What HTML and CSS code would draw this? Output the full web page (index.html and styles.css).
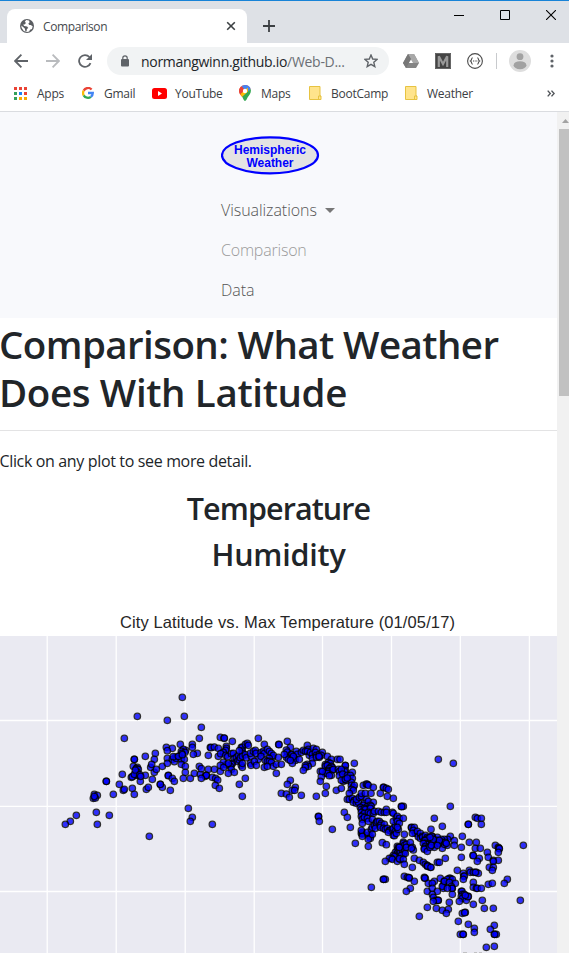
FILE: index.html
```html
<!DOCTYPE html>
<html lang="en">
<head>
<meta charset="utf-8">
<title>Comparison</title>
<link rel="stylesheet" href="styles.css">
</head>
<body>
<div class="window">
  <header class="tabstrip">
    <div class="tab">
      <svg class="globe" width="14" height="14" viewBox="0 0 14 14"><circle cx="7" cy="7" r="7" fill="#5a5d61"/><path d="M6.2 1.1 4.8 2.7 6 4.1 4.5 5.4 3.2 5.5 4.1 7.1 7.1 7.5 8.3 9.1 6.9 10.1 6.6 12.2 5.4 12.3 4.8 9.5 1.3 6.4 1.7 9.1 3.8 12 7 13 9.2 12.5 10 10.8 12 10 12.7 7.3 10.7 5.9 9.4 6.1 8.3 4.8 9.6 3.2 9 1.5Z" fill="#fff"/></svg>
      <span class="tab-title">Comparison</span>
      <svg class="tab-close" width="10" height="10" viewBox="0 0 10 10"><path d="M1.2 1.2l7.6 7.6M8.8 1.2L1.2 8.8" stroke="#3c4043" stroke-width="1.6"/></svg>
    </div>
    <svg class="new-tab" width="12" height="12" viewBox="0 0 12 12"><path d="M6 0v12M0 6h12" stroke="#3c4043" stroke-width="1.8"/></svg>
    <div class="controls">
      <svg width="10" height="10"><path d="M0 5.5h10" stroke="#000"/></svg>
      <svg width="10" height="10"><path d="M.5.5h9v9h-9z" fill="none" stroke="#000"/></svg>
      <svg width="10" height="10"><path d="M0 0l10 10M10 0L0 10" stroke="#000" stroke-width="1.1"/></svg>
    </div>
  </header>
  <div class="toolbar">
    <svg class="nav-icon" width="14" height="14" viewBox="0 0 14 14"><path d="M14 7H1.2M7.4.7 1.1 7l6.3 6.3" fill="none" stroke="#5f6368" stroke-width="1.8"/></svg>
    <svg class="nav-icon" width="14" height="14" viewBox="0 0 14 14"><path d="M0 7h12.8M6.6.7 12.9 7l-6.3 6.3" fill="none" stroke="#b9bbbe" stroke-width="1.8"/></svg>
    <svg class="nav-icon" width="14" height="14" viewBox="0 0 14 14"><path d="M12.5 9.1A5.9 5.9 0 1 1 11.4 3" fill="none" stroke="#5f6368" stroke-width="1.8"/><path d="M14 0v6H8Z" fill="#5f6368"/></svg>
    <div class="omnibox">
      <svg width="8" height="12" viewBox="0 0 8 12"><path d="M1.8 5V3a2.2 2.2 0 0 1 4.4 0v2" fill="none" stroke="#5f6368" stroke-width="1.2"/><rect y="4" width="8" height="7.4" rx="1" fill="#5f6368"/></svg>
      <span class="url">normangwinn.github.io<i>/Web-D...</i></span>
      <svg class="star" width="14" height="14" viewBox="0 0 14 14"><path d="M7 1l1.7 4 4.3.4-3.2 2.9 1 4.3L7 10.3l-3.8 2.3 1-4.3L1 5.4 5.3 5Z" fill="none" stroke="#5f6368" stroke-width="1.4"/></svg>
    </div>
    <svg class="ext-drive" width="16" height="14" viewBox="0 0 16 14"><path d="M5 0h6l5 9-3 5H3L0 9Z" fill="#858585"/><path d="M5 0h6l5 9h-6Z" fill="#a8a8a8"/><path d="M5 0 0 9l3 5 5-9Z" fill="#777"/><path d="M8 5.5 5.9 9h4.2Z" fill="#fff"/></svg>
    <svg class="ext-m" width="16" height="16" viewBox="0 0 16 16"><rect width="16" height="16" fill="#444"/><path d="M.5 15.5V.5h15v15Z" fill="none" stroke="#666"/><path d="M3.8 14V3.2L8 11l4.2-7.8V14" fill="none" stroke="#999" stroke-width="2.2"/></svg>
    <svg class="ext-b" width="16" height="16" viewBox="0 0 16 16"><circle cx="8" cy="8" r="7.4" fill="#fff" stroke="#4b4b4b" stroke-width="1.1"/><path d="M5.7 4.8c-1.5 0-.7 2.5-2.2 3.2 1.5.7.7 3.2 2.2 3.2M10.3 4.8c1.5 0 .7 2.5 2.2 3.2-1.5.7-.7 3.2-2.2 3.2M6 8h1M7.7 8h1M9.3 8h1" fill="none" stroke="#4b4b4b" stroke-width="1.1"/></svg>
    <span class="divider"></span>
    <svg class="avatar" width="22" height="22" viewBox="0 0 22 22"><circle cx="11" cy="11" r="11" fill="#dedede"/><circle cx="11" cy="6.7" r="3.4" fill="#a2a2a2"/><ellipse cx="11" cy="15.2" rx="6.4" ry="4" fill="#a2a2a2"/></svg>
    <svg class="dots" width="4" height="14" viewBox="0 0 4 14"><g fill="#5f6368"><circle cx="2" cy="2" r="1.6"/><circle cx="2" cy="7" r="1.6"/><circle cx="2" cy="12" r="1.6"/></g></svg>
  </div>
  <nav class="bookmarks">
    <span class="bm apps"><svg width="13" height="13" viewBox="0 0 13 13"><path d="M0 0h3v3H0zM5 0h3v3H5zM10 0h3v3h-3zM10 5h3v3h-3z" fill="#ea4335"/><path d="M0 5h3v3H0zM0 10h3v3H0z" fill="#34a05a"/><path d="M5 5h3v3H5z" fill="#1a82f7"/><path d="M5 10h3v3H5zM10 10h3v3h-3z" fill="#f9ab00"/></svg>Apps</span>
    <span class="bm gmail"><svg width="12" height="12" viewBox="0 0 12 12"><g fill="none" stroke-width="2.3"><path d="M9.6 2.5A4.9 4.9 0 0 0 1.7 3.6" stroke="#ea4335"/><path d="M1.7 3.6a4.9 4.9 0 0 0 0 4.8" stroke="#fbbc05"/><path d="M1.7 8.4a4.9 4.9 0 0 0 7.2 1.4" stroke="#34a853"/><path d="M8.9 9.8A4.8 4.8 0 0 0 10.8 6H6" stroke="#4285f4"/></g></svg>Gmail</span>
    <span class="bm youtube"><svg width="15" height="11" viewBox="0 0 15 11"><rect width="15" height="11" rx="2.5" fill="#f00"/><path d="M6 3v5l4-2.5Z" fill="#fff"/></svg>YouTube</span>
    <span class="bm maps"><svg width="12" height="16" viewBox="0 0 12 16"><path d="M6 0a6 6 0 0 1 5.6 4L3.2 12C1.9 10 0 9 0 6a6 6 0 0 1 6-6Z" fill="#ea4335"/><path d="M6 0a6 6 0 0 1 5.6 4L8 8 2.5 1Z" fill="#4285f4"/><path d="M.2 4.3 2 1.5 6 5 1.4 9.3C.4 8 0 6.4.2 4.3Z" fill="#ea4335"/><path d="M1.2 9.2 8.8 2.6 9 8 3.4 12Z" fill="#fbbc05"/><path d="M11.7 4c1 4-1.8 6-3 8.3C7.8 14 7.2 16 6 16s-1.8-2.5-2.8-4.2Z" fill="#34a853"/><circle cx="6" cy="6" r="2.2" fill="#fff"/></svg>Maps</span>
    <span class="bm boot"><svg width="13" height="14" viewBox="0 0 13 14"><path d="M.5.5h10.5v9.5h1v3.5H.5Z" fill="#ffe48c" stroke="#e7c341"/><path d="M9.5 13.5V10H12" fill="none" stroke="#e7c341"/></svg>BootCamp</span>
    <span class="bm weather"><svg width="13" height="14" viewBox="0 0 13 14"><path d="M.5.5h10.5v9.5h1v3.5H.5Z" fill="#ffe48c" stroke="#e7c341"/><path d="M9.5 13.5V10H12" fill="none" stroke="#e7c341"/></svg>Weather</span>
    <svg class="more" width="8" height="7" viewBox="0 0 8 7"><path d="M.7.6 3.3 3.5.7 6.4M4.5.6l2.6 2.9-2.6 2.9" fill="none" stroke="#505459" stroke-width="1.4"/></svg>
  </nav>
  <div class="viewport">
    <main class="page">
      <nav class="sitenav">
        <svg class="brand" width="99" height="39" viewBox="0 0 99 39"><ellipse cx="49" cy="19.3" rx="48" ry="18" fill="#e3e3e3" stroke="#00f" stroke-width="2.2"/><text x="49" y="18" textLength="72">Hemispheric</text><text x="49" y="31" textLength="47">Weather</text></svg>
        <a class="link">Visualizations<span class="caret"></span></a>
        <a class="link active">Comparison</a>
        <a class="link">Data</a>
      </nav>
      <h1><span class="l1">Comparison: What Weather</span><br><span class="l2">Does With Latitude</span></h1>
      <hr>
      <p>Click on any plot to see more detail.</p>
      <h2>Temperature</h2>
      <h2 class="humidity">Humidity</h2>
      <div class="plot-title">City Latitude vs. Max Temperature (01/05/17)</div>
      <svg class="plot" width="557" height="317" viewBox="0 636 557 317">
        <rect y="636" width="557" height="317" fill="#eaeaf2"/>
        <path d="M47.2 636v317M116.2 636v317M185.2 636v317M254.2 636v317M322.5 636v317M391.5 636v317M460.3 636v317M529.4 636v317M0 720.5h557M0 806.4h557M0 891.5h557" stroke="#fff" stroke-width="1.3"/>
        <path d="M463 952.7h4M474 952.7h3M479 952.7h3" stroke="#aaa" stroke-width=".8"/>
        <g id="points"></g>
      </svg>
    </main>
    <aside class="scrollbar"><span class="up"></span><span class="thumb"></span></aside>
  </div>
</div>
<script src="plot.js"></script>
</body>
</html>
```
FILE: plot.js
```js
// City markers, stored per tile in thirds of a pixel from the tile origin.
const tiles = [
  [50, 680, "262,109 352,121 223,175 349,202 367,205 352,212 316,220 286,229 313,238 253,238 253,238 250,259 302,262 305,253 337,259 352,235 352,250 217,283 169,304 169,304 208,313 220,331 223,328 247,325 253,343 190,343 133,343 142,346 130,355 136,354 133,349 139,397 178,406 79,406 61,424 46,433 142,433 298,469 286,286 271,304 307,298 313,277 319,268 289,328 295,322 331,313 337,322 355,286 355,287 361,331 367,295 373,304 262,262 259,266 265,268 256,286 265,286 244,292 247,290 262,277 253,283 269,284 272,289 256,270"],
  [155, 680, "82,52 88,109 139,142 133,175 76,193 112,193 112,202 92,211 85,208 79,214 90,217 80,220 73,229 61,232 52,238 58,245 64,235 55,230 79,238 88,238 79,253 91,259 70,229 82,224 91,277 85,295 106,295 127,220 115,223 118,280 136,283 133,259 139,266 151,289 160,268 154,286 154,286 139,295 178,268 172,292 182,295 188,300 181,316 193,325 196,274 160,226 166,202 168,203 178,201 190,205 196,172 207,175 208,174 232,184 214,199 214,205 212,211 205,217 190,229 197,221 212,226 218,230 229,221 235,220 238,236 244,233 250,226 247,244 253,240 256,233 232,250 230,253 226,259 214,254 205,247 196,256 206,262 220,250 229,268 220,280 238,277 259,202 262,202 271,193 277,190 280,196 262,213 263,220 262,229 253,212 271,224 274,233 289,229 286,220 295,214 301,211 310,175 303,220 310,238 259,256 262,262 262,250 286,250 288,256 298,244 304,256 271,295 253,313 262,349 16,313 100,385 112,412 106,424 172,433"],
  [260, 720, "13,73 56,73 57,74 82,64 91,82 79,90 82,96 94,103 96,104 109,94 112,103 103,115 97,115 106,121 79,112 85,118 73,103 100,109 118,118 97,130 91,121 124,97 130,91 142,76 145,88 136,94 142,94 148,106 151,97 157,103 160,85 169,88 157,115 157,130 142,133 145,139 136,136 136,142 130,151 166,97 169,106 169,112 178,103 187,97 184,106 178,112 177,109 202,109 214,118 232,118 205,127 211,130 196,134 196,139 202,136 214,139 217,142 208,145 205,151 205,155 217,150 220,148 196,160 202,160 214,166 208,167 181,154 184,170 181,184 187,154 235,148 238,155 238,167 199,199 196,220 229,211 169,229 124,226 106,202 97,211 104,211 91,181 82,193 64,220 79,222 88,232 49,160 175,289 176,290 178,304 217,328 3,98 10,94 13,100 3,109 22,88 28,94 34,100 37,112 40,106 28,115 16,121 22,124 28,124 34,127 13,142 22,139 40,139 49,133 64,133 55,112"],
  [340, 750, "43,40 16,46 16,47 16,61 14,65 37,67 4,58 8,72 22,76 31,76 37,85 10,94 19,91 4,91 16,88 34,97 4,115 34,106 40,112 43,106 34,118 40,121 28,130 22,148 28,148 37,145 43,151 40,157 49,160 55,157 49,148 58,142 64,139 64,130 76,130 79,148 93,130 70,106 79,102 82,103 85,106 100,112 121,130 130,112 131,112 139,115 145,118 142,139 160,145 73,160 85,154 100,157 70,166 82,169 91,166 94,169 61,172 64,178 73,175 78,180 76,178 91,175 64,187 67,196 73,190 85,187 91,190 100,190 103,184 115,184 124,187 133,187 139,178 139,187 157,187 160,190 184,169 190,169 185,170 64,199 67,208 73,202 82,205 67,220 85,214 97,208 13,187 22,202 31,232 46,280 85,289 64,250 67,247 67,252 64,241 67,259 85,256 91,259 91,265 85,268 82,247 94,238 97,232 97,253 103,226 109,217 109,220 112,214 118,214 106,235 124,220 121,226 121,232 133,223 130,235 136,238 142,235 148,241 151,241 145,247 157,238 160,235 166,244 160,256 163,257 169,250 166,226 160,214 169,205 172,199 178,205 172,214 190,205 178,220 175,238 172,232 193,253 214,232 215,233 223,232 220,241 226,250 217,250 232,244 235,260 241,250 241,265 247,259 248,262 256,256 262,262 253,271 262,271 265,265 265,283 256,271 127,278 139,284 0,28 22,84"],
  [340, 840, "190,6 190,10 193,16 199,13 211,8 172,19 175,22 172,30 166,37 172,40 178,31 181,37 187,31 193,35 190,43 184,46 196,40 178,22 199,22 217,22 220,30 214,25 160,46 163,50 154,55 148,55 136,64 157,58 172,64 181,58 178,56 190,58 193,73 217,82 223,55 238,61 250,67 256,73 262,76 262,79 271,82 263,78 256,10 262,13 250,10 256,19 265,22 253,25 253,28 262,34 130,118 136,118 131,118 94,142 193,109 202,112 208,114 207,113 223,124 211,145 199,154 238,229 253,112 256,115 254,114 265,130 262,154 262,202"],
  [430, 750, "25,28 70,40 61,169 13,205 37,229 3,238 136,202 142,205 154,205 154,223 115,223 115,223 97,259 61,259 73,272 73,286 118,277 139,277 94,292 136,295 151,295 196,286 205,292 207,295 208,296 205,307 172,307 175,322 280,286 129,316 130,317 148,325 94,322 46,325 190,331 205,331 37,295 52,286 53,268 43,268 34,268 37,277 43,283 46,277 22,262 19,271 16,280 19,277 25,280 28,271 7,259 5,259 4,271 7,280 13,292 0,292 10,268 4,286 0,262 22,286 49,280"],
  [430, 845, "22,52 28,52 3,67 142,49 190,49 178,67 190,67 187,76 82,76 100,85 118,76 121,82 130,82 139,82 145,85 136,82 101,94 103,93 100,103 61,100 58,100 31,100 43,109 52,103 67,103 13,109 7,115 40,121 40,130 37,124 43,109 58,112 76,115 64,124 67,130 66,130 52,130 7,130 22,139 7,148 10,157 19,166 25,166 24,166 10,169 67,148 58,172 19,190 37,196 55,193 49,205 94,139 96,139 97,148 94,154 103,148 97,160 109,166 115,154 114,155 106,151 88,169 130,112 130,127 139,130 142,130 154,130 175,118 187,115 232,103 223,115 130,178 157,166 163,190 190,190 97,205 106,202 104,203 85,229 115,238 133,250 133,262 91,268 100,268 99,268 193,241 181,253 193,268 199,268 194,268 169,307 193,304 271,166"]
];
const group = document.getElementById("points");
for (const [ox, oy, list] of tiles) {
  for (const pair of list.split(" ")) {
    const [x, y] = pair.split(",").map(Number);
    const dot = document.createElementNS("http://www.w3.org/2000/svg", "circle");
    dot.setAttribute("cx", ox + x / 3);
    dot.setAttribute("cy", oy + y / 3);
    dot.setAttribute("r", 3.2);
    group.appendChild(dot);
  }
}
```
FILE: styles.css
```css
* { box-sizing: border-box; }
body { margin: 0; font-family: "Open Sans", "Noto Sans", sans-serif; color: #212529; background: #fff; }
svg { display: block; flex: none; }
.window { width: 569px; height: 953px; overflow: hidden; display: flex; flex-direction: column; }
.tabstrip { height: 43px; flex: none; background: #dee1e6; border-top: 1px solid #1883d7; padding: 8px 13px 0 7px; display: flex; }
.tab { width: 240px; background: #fff; border-radius: 8px 8px 0 0; display: flex; align-items: center; padding: 0 11px 0 13px; }
.tab-title { font-size: 12px; letter-spacing: -.4px; color: #45494d; margin-left: 9px; flex: 1; }
.new-tab { margin: 11px 0 0 16px; }
.controls { display: flex; gap: 36px; margin: 1px 0 0 auto; }
.toolbar { height: 36px; flex: none; display: flex; align-items: center; padding-left: 14px; }
.nav-icon { margin-right: 18px; }
.nav-icon + .nav-icon + .nav-icon { margin-right: 15px; }
.omnibox { width: 282px; height: 28px; border-radius: 14px; background: #f1f3f4; display: flex; align-items: center; padding: 0 11px 0 14px; }
.url { flex: 1; margin-left: 12px; font-size: 14px; letter-spacing: -.3px; white-space: nowrap; }
.url i { font-style: normal; color: #6b6f74; }
.ext-drive { margin-left: 14px; }
.ext-m, .ext-b { margin-left: 16px; }
.divider { width: 1px; height: 16px; background: #c8cacd; margin-left: 13px; }
.avatar { margin-left: 12px; }
.dots { margin-left: 19px; }
.bookmarks { height: 33px; flex: none; border-bottom: 1px solid #dadce0; display: flex; align-items: center; padding: 0 14px 4px; font-size: 12px; letter-spacing: -.25px; color: #3c4043; }
.bm { display: flex; align-items: center; gap: 10px; flex: none; }
.apps { width: 68px; }
.gmail { width: 70px; }
.youtube { width: 87px; gap: 8px; }
.maps { width: 70px; }
.boot, .weather { width: 96px; gap: 9px; }
.more { margin-left: auto; }
.viewport { flex: 1; display: flex; min-height: 0; }
.page { width: 557px; overflow: hidden; }
.scrollbar { width: 12px; background: #f1f1f1; padding-left: 2px; }
.up { display: block; margin: 7px 0 0 3px; width: 7px; height: 4px; background: #a3a3a3; clip-path: polygon(50% 0, 100% 100%, 0 100%); }
.thumb { display: block; height: 267px; margin-top: 6px; background: #c1c1c1; }
.sitenav { height: 206px; background: #f8f9fc; padding: 24px 0 0 221px; }
.brand { margin-bottom: 15px; }
.brand text { font: bold 12px "Liberation Sans", sans-serif; fill: #00f; text-anchor: middle; }
.link { display: flex; align-items: center; height: 40px; font-size: 16px; font-weight: 300; letter-spacing: -.05px; color: #555; }
.link.active { color: #9a9a9a; letter-spacing: -.2px; }
.caret { border: 5px solid transparent; border-top-color: #777; border-bottom: 0; margin-left: 8px; }
h1 { margin: 2px 0 14px; font-size: 38.5px; line-height: 48px; font-weight: 600; white-space: nowrap; }
.l1 { letter-spacing: -.58px; margin-left: -1px; }
.l2 { letter-spacing: -.36px; margin-left: -1px; }
hr { margin: 0; border: 0; border-top: 1px solid #e3e3e4; }
p { margin: 18px 0 16px; font-size: 16px; line-height: 24px; letter-spacing: -.35px; text-indent: -.5px; }
h2 { margin: 0 0 8px; padding-top: 1px; font-size: 30.5px; line-height: 37px; font-weight: 600; text-align: center; letter-spacing: -.9px; }
.humidity { letter-spacing: -.2px; }
.plot-title { margin-top: 37px; height: 26px; padding: 3px 0 0 18px; text-align: center; font: 16.5px/19px "Liberation Sans", sans-serif; letter-spacing: .12px; color: #262626; }
#points circle { fill: #00f; stroke: #000; stroke-width: 1.3; opacity: .8; }
```
